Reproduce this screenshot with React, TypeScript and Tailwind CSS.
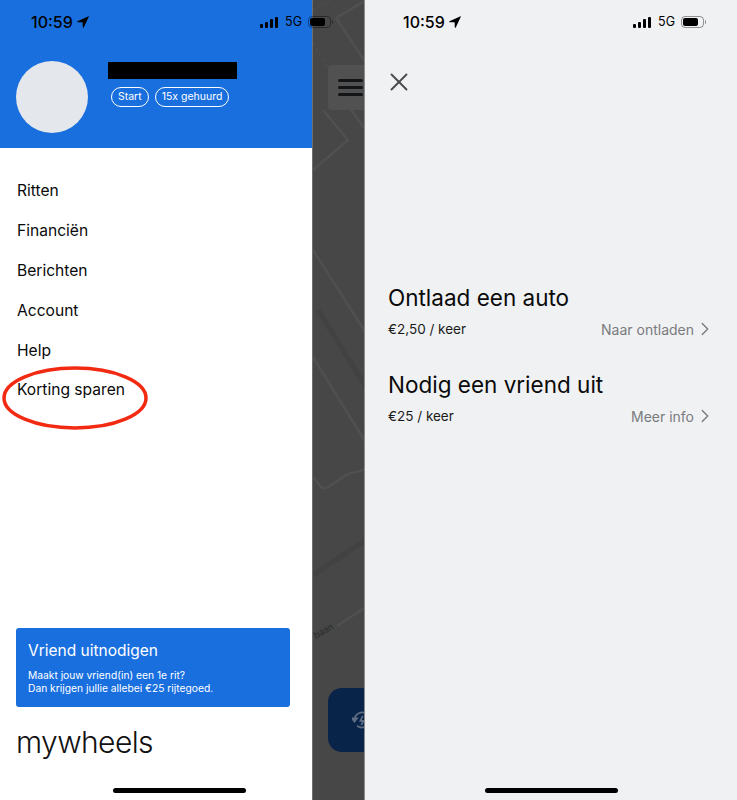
import { ChevronRight, X } from 'lucide-react'

const menu = ['Ritten', 'Financiën', 'Berichten', 'Account', 'Help', 'Korting sparen']

function LocationArrow({ className }: { className: string }) {
  return (
    <svg viewBox="0 0 12 12" className={className} fill="currentColor">
      <path d="M11.6.2.5 5.2c-.6.3-.4 1 .2 1l4.9.1.2 5c.1.6.8.7 1 .2L11.9.6c.1-.3-.1-.5-.3-.4Z" />
    </svg>
  )
}

function Signal() {
  return (
    <div className="flex items-end gap-[2px] h-[11px]">
      <div className="w-[3px] h-[4px] bg-black rounded-[1px]" />
      <div className="w-[3px] h-[6px] bg-black rounded-[1px]" />
      <div className="w-[3px] h-[9px] bg-black rounded-[1px]" />
      <div className="w-[3px] h-[11px] bg-black rounded-[1px]" />
    </div>
  )
}

function Battery() {
  return (
    <div className="flex items-center gap-[1px]">
      <div className="w-[23px] h-[12px] rounded-[4px] border border-black/40 p-[1px]">
        <div className="w-[15px] h-full rounded-[2px] bg-black" />
      </div>
      <div className="w-[1px] h-[4px] bg-black/40 rounded-r" />
    </div>
  )
}

function StatusBar() {
  return (
    <div className="flex items-center justify-between h-[14px] text-black">
      <div className="flex items-center gap-[4px]">
        <span className="text-[16px] font-medium leading-none">10:59</span>
        <LocationArrow className="w-[12px] h-[12px]" />
      </div>
      <div className="flex items-center">
        <Signal />
        <span className="ml-[7px] mr-[6px] pt-[1px] text-[12.5px] leading-none">5G</span>
        <Battery />
      </div>
    </div>
  )
}

function MapStrip() {
  return (
    <div className="relative w-[53px] h-full bg-[#464746] overflow-hidden border-l border-r border-l-[#6f6f6f] border-r-[#8c8c8c]">
      <svg viewBox="0 0 53 800" className="absolute inset-0 w-[53px] h-[800px]" fill="none">
        <g stroke="#4f504f" strokeWidth="2.5">
          <path d="M23 18 53 0M23 18 53 63" />
          <path d="M10 110 35 140 0 170M38 110 53 130" />
          <path d="M0 250 53 333M0 357 53 443" />
          <path d="M0 477 7 486c3 3 5 3 8 1l18-12c5-3 14-2 20-7" />
          <path d="M24 626 53 607" />
        </g>
        <g stroke="#525352" strokeWidth="1" strokeDasharray="3 3">
          <path d="M0 10 17 0M0 43 17 72" />
        </g>
        <g stroke="#414241" strokeWidth="5">
          <path d="M5 310 53 387" />
          <path d="M0 575 53 540" />
        </g>
      </svg>
      <span className="absolute left-0 top-[625px] text-[9px] leading-[12px] text-[#2a2b2b] -rotate-[30deg]">baan</span>
      <div className="absolute left-0 top-0 w-[1px] h-[148px] -ml-[1px] bg-[#1f5cb0]" />
      <div className="absolute left-[15px] top-[65px] w-[38px] h-[45px] bg-[#505150] rounded-l-[3px] flex flex-col gap-[4px] pl-[10px] justify-center">
        <div className="w-[25px] h-[3px] bg-[#131517] rounded-full" />
        <div className="w-[25px] h-[3px] bg-[#131517] rounded-full" />
        <div className="w-[25px] h-[3px] bg-[#131517] rounded-full" />
      </div>
      <div className="absolute left-[15px] top-[688px] w-[38px] h-[64px] bg-[#082449] rounded-l-[14px]">
        <svg viewBox="0 0 24 24" className="absolute left-[24px] top-[22px] w-[20px] h-[20px]" fill="none" stroke="#5f6e82" strokeWidth="2">
          <path d="M3 12a9 9 0 0 1 15-6.7M21 12a9 9 0 0 1-15 6.7" />
          <path d="M0 10h6L3 14Z" fill="#5f6e82" />
          <path d="M13 7 10 13h4l-3 5" />
        </svg>
      </div>
    </div>
  )
}

function EarnRow({ title, price, action }: { title: string; price: string; action: string }) {
  return (
    <div>
      <h2 className="text-[22.5px] leading-[28px] text-[#0a0a0a]">{title}</h2>
      <div className="flex items-center justify-between mt-[7px] h-[20px]">
        <span className="text-[13.5px] text-[#1a1a1a]">{price}</span>
        <div className="flex items-center text-[#7a7b7e]">
          <span className="text-[14px]">{action}</span>
          <ChevronRight size={22} strokeWidth={1.5} className="mr-[-2px]" />
        </div>
      </div>
    </div>
  )
}

export default function App() {
  return (
    <div className="relative flex w-[737px] h-[800px] overflow-hidden bg-white font-['Inter',sans-serif]">
      {/* left phone: menu */}
      <div className="flex flex-col w-[312px] h-full bg-white">
        <div className="relative h-[148px] bg-[#1a6fdf] pt-[15px]">
          <div className="relative z-10 w-[333px] pl-[31px]">
            <StatusBar />
          </div>
          <div className="flex items-start pl-[16px] mt-[32px]">
            <div className="w-[72px] h-[72px] rounded-full bg-[#e4e7ec]" />
            <div className="ml-[20px] mt-[1px]">
              <div className="w-[129px] h-[17px] bg-black" />
              <div className="flex gap-[6px] mt-[8px] ml-[3px]">
                <span className="px-[6px] h-[20px] flex items-center rounded-full border border-white text-white text-[10.5px]">Start</span>
                <span className="px-[6px] h-[20px] flex items-center rounded-full border border-white text-white text-[10.5px]">15x gehuurd</span>
              </div>
            </div>
          </div>
        </div>

        <nav className="flex flex-col gap-[15.9px] pt-[31px] pl-[17px]">
          {menu.map((item) => (
            <span key={item} className="text-[15.6px] leading-[24px] text-[#0a0a0a]">{item}</span>
          ))}
        </nav>

        <div className="mt-auto ml-[16px] mr-[22px]">
          <div className="h-[79px] rounded-[3px] bg-[#1a6fdf] text-white px-[12px] pt-[14px]">
            <div className="text-[15.5px] leading-[18px]">Vriend uitnodigen</div>
            <div className="text-[10.25px] leading-[13px] mt-[9px]">
              Maakt jouw vriend(in) een 1e rit?
              <br />
              Dan krijgen jullie allebei €25 rijtegoed.
            </div>
          </div>
          <div className="mt-[17px] text-[30px] leading-[36px] font-light tracking-[-0.6px] text-[#111]">mywheels</div>
        </div>
        <div className="flex justify-center pt-[28px] pb-[7px] pl-[47px]">
          <div className="w-[133px] h-[5px] bg-black rounded-full" />
        </div>
      </div>

      <MapStrip />

      {/* right phone: earn discount */}
      <div className="flex flex-col flex-1 h-full bg-[#f0f1f3] px-[23px] pt-[15px]">
        <div className="ml-[15px] mr-[8px]">
          <StatusBar />
        </div>
        <X size={30} strokeWidth={1.5} className="mt-[38px] ml-[-4px] text-[#4a4b4d]" />
        <div className="flex flex-col gap-[32px] mt-[187px]">
          <EarnRow title="Ontlaad een auto" price="€2,50 / keer" action="Naar ontladen" />
          <EarnRow title="Nodig een vriend uit" price="€25 / keer" action="Meer info" />
        </div>
        <div className="mt-auto mb-[7px] mx-auto w-[133px] h-[5px] bg-black rounded-full" />
      </div>

      {/* red marker drawn over the menu */}
      <svg viewBox="0 0 150 68" className="absolute left-[1px] top-[365px] w-[150px] h-[68px]" fill="none">
        <ellipse cx="74" cy="33" rx="71" ry="30" stroke="#f32a12" strokeWidth="3.5" />
      </svg>
    </div>
  )
}
